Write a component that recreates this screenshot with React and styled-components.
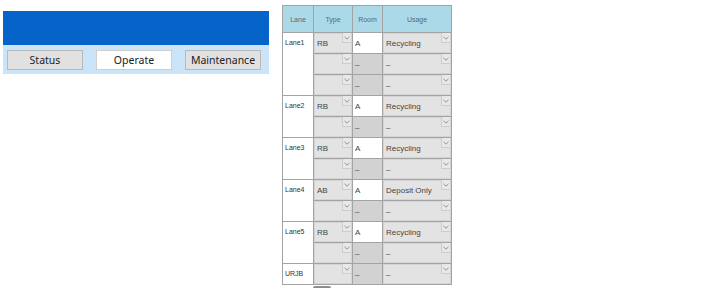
import React from "react";
import styled, { createGlobalStyle } from "styled-components";

const Global = createGlobalStyle`
  html, body { margin: 0; padding: 0; background: #ffffff; }
  body { font-family: "Liberation Sans", Arial, sans-serif; }
`;

const Page = styled.div`
  display: flex;
  align-items: flex-start;
  width: 720px;
  height: 288px;
  overflow: hidden;
`;

const LeftPanel = styled.div`
  margin: 11px 0 0 3px;
  width: 266px;
  display: flex;
  flex-direction: column;
`;

const Banner = styled.div`
  height: 34px;
  background: #0563c9;
`;

const NavBar = styled.div`
  height: 29px;
  background: #cce4f7;
  display: flex;
  align-items: flex-start;
  gap: 13px;
  padding: 5px 0 0 4px;
  box-sizing: border-box;
`;

const NavButton = styled.button`
  width: 76px;
  height: 20px;
  padding: 0;
  box-sizing: border-box;
  border: 1px solid ${(p) => (p.$active ? "#cfcfcf" : "#b9b9b9")};
  background: ${(p) => (p.$active ? "#ffffff" : "#e1e1e1")};
  font-family: "Noto Sans", "Liberation Sans", sans-serif;
  font-size: 10.5px;
  line-height: 18px;
  color: #222;
`;

const TableWrap = styled.div`
  margin: 5px 0 0 13px;
  display: flex;
  flex-direction: column;
`;

const Grid = styled.div`
  display: grid;
  grid-template-columns: 30px 38px 29px 68px;
  grid-template-rows: 26px repeat(12, 20px);
  gap: 1px;
  background: #a3a3a3;
  border: 1px solid #a3a3a3;
  width: max-content;
`;

const HeadCell = styled.div`
  background: #acd9e8;
  color: #4f6a78;
  font-size: 7px;
  display: flex;
  align-items: center;
  justify-content: center;
`;

const LaneCell = styled.div`
  background: #ffffff;
  grid-row: span ${(p) => p.$span};
  font-size: 7px;
  color: #333;
  padding: 6px 0 0 2px;
  line-height: 8px;
`;

const ComboCell = styled.div`
  position: relative;
  background: #e3e3e3;
  box-shadow: inset 0 0 0 1px #d4d4d4;
  font-size: 8px;
  color: #444;
  display: flex;
  align-items: center;
  padding: 1px 0 0 3px;
  white-space: nowrap;
  overflow: hidden;
`;

const ArrowBox = styled.span`
  position: absolute;
  top: 0;
  right: 1px;
  width: 9px;
  height: 10px;
  box-sizing: border-box;
  border-left: 1px solid #cdcdcd;
  border-bottom: 1px solid #cdcdcd;
  background: #e8e8e8;
  display: flex;
  align-items: center;
  justify-content: center;
`;

const RoomCell = styled.div`
  background: ${(p) => (p.$filled ? "#ffffff" : "#d2d2d2")};
  font-size: 8px;
  color: #444;
  display: flex;
  align-items: center;
  padding: 1px 0 0 2px;
`;

const Thumb = styled.div`
  margin: 1px 0 0 31px;
  width: 18px;
  height: 3px;
  border-radius: 2px 2px 0 0;
  background: #8e8e8e;
`;

const Chevron = () => (
  <svg width="6" height="4" viewBox="0 0 6 4">
    <path d="M0.5 0.8 L3 3.2 L5.5 0.8" fill="none" stroke="#8a8a8a" strokeWidth="0.9" />
  </svg>
);

const Combo = ({ text }) => (
  <ComboCell>
    {text}
    <ArrowBox>
      <Chevron />
    </ArrowBox>
  </ComboCell>
);

const lanes = [
  { name: "Lane1", type: "RB", usage: "Recycling", rows: 3 },
  { name: "Lane2", type: "RB", usage: "Recycling", rows: 2 },
  { name: "Lane3", type: "RB", usage: "Recycling", rows: 2 },
  { name: "Lane4", type: "AB", usage: "Deposit Only", rows: 2 },
  { name: "Lane5", type: "RB", usage: "Recycling", rows: 2 },
  { name: "URJB", type: "", usage: null, rows: 1 },
];

export default function App() {
  const tabs = ["Status", "Operate", "Maintenance"];
  return (
    <>
      <Global />
      <Page>
        <LeftPanel>
          <Banner />
          <NavBar>
            {tabs.map((t) => (
              <NavButton key={t} $active={t === "Operate"}>
                {t}
              </NavButton>
            ))}
          </NavBar>
        </LeftPanel>
        <TableWrap>
          <Grid>
            <HeadCell>Lane</HeadCell>
            <HeadCell>Type</HeadCell>
            <HeadCell>Room</HeadCell>
            <HeadCell>Usage</HeadCell>
            {lanes.map((lane) =>
              Array.from({ length: lane.rows }).map((_, i) => {
                const first = i === 0 && lane.usage;
                return (
                  <React.Fragment key={lane.name + i}>
                    {i === 0 && <LaneCell $span={lane.rows}>{lane.name}</LaneCell>}
                    <Combo text={i === 0 ? lane.type : ""} />
                    <RoomCell $filled={!!first}>{first ? "A" : "–"}</RoomCell>
                    <Combo text={first ? lane.usage : "–"} />
                  </React.Fragment>
                );
              })
            )}
          </Grid>
          <Thumb />
        </TableWrap>
      </Page>
    </>
  );
}
